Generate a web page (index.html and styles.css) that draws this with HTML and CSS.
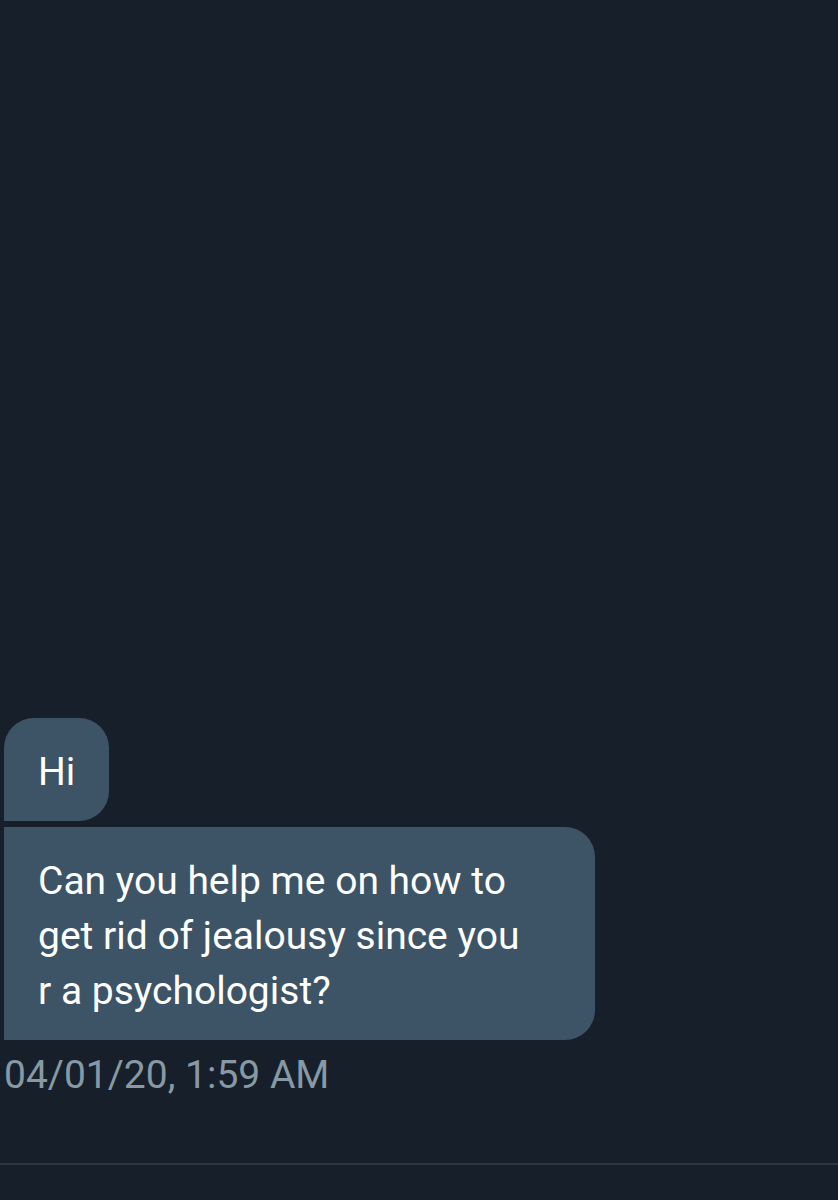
FILE: index.html
```html
<!DOCTYPE html>
<html lang="en">

<head>
  <meta charset="UTF-8">
  <meta name="viewport" content="width=device-width, initial-scale=1.0">
  <title>Messages</title>
  <link rel="stylesheet" href="styles.css">
</head>

<body>

  <div class="conversation">
    <div class="thread">
      <div class="bubble bubble--first">Hi</div>
      <div class="bubble bubble--last">Can you help me on how to get rid of jealousy since you r a psychologist?</div>
      <div class="timestamp">04/01/20, 1:59 AM</div>
    </div>
    <div class="composer"></div>
  </div>

</body>

</html>
```
FILE: styles.css
```css
body {
  margin: 0;
  background: #17202a;
  font-family: Roboto, "Noto Sans", sans-serif;
}

.conversation {
  height: 100vh;
  display: flex;
  flex-direction: column;
}

.thread {
  flex: 1;
  display: flex;
  flex-direction: column;
  justify-content: flex-end;
  align-items: flex-start;
  gap: 6px;
  padding: 0 0 65px 4px;
}

.bubble {
  box-sizing: border-box;
  max-width: 591px;
  background: #3d5466;
  color: #ffffff;
  font-size: 39px;
  line-height: 55px;
  padding: 27px 34px 21px 34px;
}

/* first bubble of a group: rounded top, flat bottom-left */
.bubble--first {
  border-radius: 30px 30px 30px 0;
}

/* last bubble: flat on the left side, wraps early like the app */
.bubble--last {
  border-radius: 0 30px 30px 0;
  padding-right: 65px;
}

.timestamp {
  margin-top: 6px;
  font-size: 39px;
  line-height: 46px;
  color: #8899a6;
}

.composer {
  height: 35px;
  border-top: 2px solid #2c3843;
}
```
